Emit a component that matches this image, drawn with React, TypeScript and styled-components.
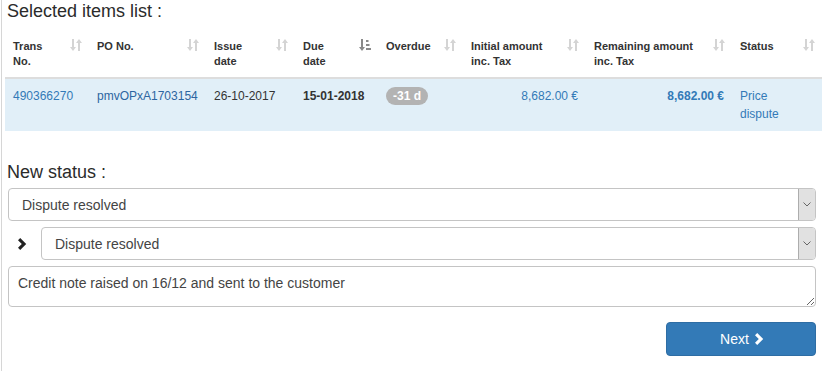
import React from "react";
import styled, { createGlobalStyle } from "styled-components";

const GlobalStyle = createGlobalStyle`
  html, body { margin: 0; padding: 0; background: #fff; }
  body { font-family: "Liberation Sans", Arial, sans-serif; color: #333; }
  * { box-sizing: border-box; }
`;

const Page = styled.div`
  width: 828px;
  height: 371px;
  margin-left: 1px;
  border-left: 1px solid #d6d6d6;
  padding-left: 3px;
  overflow: hidden;
`;

const Title = styled.h3<{ $gap: number; $top?: number }>`
  margin: ${(p) => p.$top ?? 0}px 0 ${(p) => p.$gap}px 0;
  padding-left: 2px;
  font-size: 18px;
  line-height: 22px;
  font-weight: normal;
  color: #2b2b2b;
`;

const Table = styled.table`
  width: 817px;
  border-collapse: collapse;
  table-layout: fixed;
  font-size: 12px;
  line-height: 18px;
`;

const Th = styled.th`
  padding: 8px 7px 8px 8px;
  text-align: left;
  vertical-align: top;
  font-size: 11px;
  line-height: 15px;
  font-weight: bold;
  color: #333;
  border-bottom: 2px solid #dddddd;
`;

const HeadInner = styled.div`
  display: flex;
  justify-content: space-between;
  align-items: flex-start;
  gap: 4px;
`;

const SortIcon = styled.svg<{ $active?: boolean }>`
  flex: none;
  width: 12px;
  height: 12px;
  color: ${(p) => (p.$active ? "#8a8a8a" : "#d4d4d4")};
`;

const Row = styled.tr`
  background: #e1eff8;
`;

const Td = styled.td<{ $align?: string; $bold?: boolean; $color?: string; $padRight?: number }>`
  padding: 8px ${(p) => p.$padRight ?? 8}px 8px 8px;
  vertical-align: top;
  text-align: ${(p) => p.$align ?? "left"};
  font-weight: ${(p) => (p.$bold ? "bold" : "normal")};
  color: ${(p) => p.$color ?? "#333"};
  height: 52px;
`;

const Badge = styled.span`
  display: inline-block;
  vertical-align: top;
  padding: 1px 7px;
  border-radius: 9px;
  background: #b3b3b3;
  color: #fff;
  font-weight: bold;
  font-size: 12px;
  line-height: 16px;
`;

const Form = styled.div`
  width: 808px;
  margin-left: 3px;
  display: flex;
  flex-direction: column;
  gap: 6px;
`;

const SelectBox = styled.div`
  flex: 1 1 auto;
  min-width: 0;
  display: flex;
  height: 33px;
  border: 1px solid #c4c4c4;
  border-radius: 4px;
  overflow: hidden;
  font-size: 14px;
  line-height: 20px;
  color: #444;
  background: #fff;
`;

const SelectValue = styled.div`
  flex: 1;
  display: flex;
  align-items: center;
  padding-left: 13px;
`;

const ArrowBox = styled.div`
  flex: none;
  width: 17px;
  display: flex;
  align-items: center;
  justify-content: center;
  background: #e1e1e1;
  border-left: 1px solid #adadad;
  color: #666;
`;

const SubRow = styled.div`
  display: flex;
  align-items: center;
`;

const ChevronCell = styled.div`
  flex: none;
  width: 33px;
  display: flex;
  align-items: center;
  padding-left: 10px;
  color: #222;
`;

const Note = styled.textarea`
  width: 100%;
  height: 41px;
  resize: vertical;
  border: 1px solid #c4c4c4;
  border-radius: 4px;
  padding: 6px 9px;
  font-family: "Liberation Sans", Arial, sans-serif;
  font-size: 14px;
  line-height: 20px;
  color: #444;
  outline: none;
  display: block;
`;

const Actions = styled.div`
  display: flex;
  justify-content: flex-end;
  margin-top: 9px;
`;

const NextButton = styled.button`
  width: 150px;
  height: 34px;
  border: 1px solid #2e6da4;
  border-radius: 4px;
  background: #337ab7;
  color: #fff;
  font-family: "Liberation Sans", Arial, sans-serif;
  font-size: 14px;
  display: flex;
  align-items: center;
  justify-content: center;
  gap: 6px;
  padding: 0 0 0 2px;
`;

const Sort = () => (
  <SortIcon viewBox="0 0 12 12">
    <path d="M2 0h2v8h2l-3 4-3-4h2z" fill="currentColor" />
    <path d="M8 12h2V4h2L9 0 6 4h2z" fill="currentColor" />
  </SortIcon>
);

const SortActive = () => (
  <SortIcon viewBox="0 0 12 12" $active>
    <path d="M2 0h2v8h2l-3 4-3-4h2z" fill="currentColor" />
    <rect x="7" y="1" width="2.5" height="2" fill="currentColor" />
    <rect x="7" y="5" width="3.5" height="2" fill="currentColor" />
    <rect x="7" y="9" width="5" height="2" fill="currentColor" />
  </SortIcon>
);

const ChevronRight = ({ w = 9, h = 12 }: { w?: number; h?: number }) => (
  <svg width={w} height={h} viewBox="0 0 9 12">
    <path d="M0 2.2L2.2 0 8.2 6 2.2 12 0 9.8 3.8 6z" fill="currentColor" />
  </svg>
);

const ChevronDown = () => (
  <svg width="8" height="5" viewBox="0 0 8 5">
    <path d="M0.5 0.5L4 4l3.5-3.5" fill="none" stroke="currentColor" strokeWidth="1" />
  </svg>
);

const columns: { label: React.ReactNode; width: number; active?: boolean }[] = [
  { label: <>Trans<br />No.</>, width: 84 },
  { label: "PO No.", width: 117 },
  { label: <>Issue<br />date</>, width: 89 },
  { label: <>Due<br />date</>, width: 83, active: true },
  { label: "Overdue", width: 85 },
  { label: <>Initial amount<br />inc. Tax</>, width: 123 },
  { label: <>Remaining amount<br />inc. Tax</>, width: 146 },
  { label: "Status", width: 90 },
];

const Select = ({ value }: { value: string }) => (
  <SelectBox>
    <SelectValue>{value}</SelectValue>
    <ArrowBox>
      <ChevronDown />
    </ArrowBox>
  </SelectBox>
);

export default function App() {
  return (
    <>
      <GlobalStyle />
      <Page>
        <Title $gap={9}>Selected items list :</Title>
        <Table>
          <colgroup>
            {columns.map((c, i) => (
              <col key={i} style={{ width: c.width }} />
            ))}
          </colgroup>
          <thead>
            <tr>
              {columns.map((c, i) => (
                <Th key={i}>
                  <HeadInner>
                    <span>{c.label}</span>
                    {c.active ? <SortActive /> : <Sort />}
                  </HeadInner>
                </Th>
              ))}
            </tr>
          </thead>
          <tbody>
            <Row>
              <Td $color="#337ab7">490366270</Td>
              <Td $color="#2c65a0">pmvOPxA1703154</Td>
              <Td>26-10-2017</Td>
              <Td $bold>15-01-2018</Td>
              <Td>
                <Badge>-31 d</Badge>
              </Td>
              <Td $align="right" $color="#337ab7">8,682.00 €</Td>
              <Td $align="right" $bold $color="#337ab7">8,682.00 €</Td>
              <Td $color="#337ab7" $padRight={24}>Price dispute</Td>
            </Row>
          </tbody>
        </Table>
        <Title $gap={5} $top={30}>New status :</Title>
        <Form>
          <Select value="Dispute resolved" />
          <SubRow>
            <ChevronCell>
              <ChevronRight />
            </ChevronCell>
            <Select value="Dispute resolved" />
          </SubRow>
          <Note defaultValue="Credit note raised on 16/12 and sent to the customer" />
          <Actions>
            <NextButton>
              Next <ChevronRight w={9} h={12} />
            </NextButton>
          </Actions>
        </Form>
      </Page>
    </>
  );
}
